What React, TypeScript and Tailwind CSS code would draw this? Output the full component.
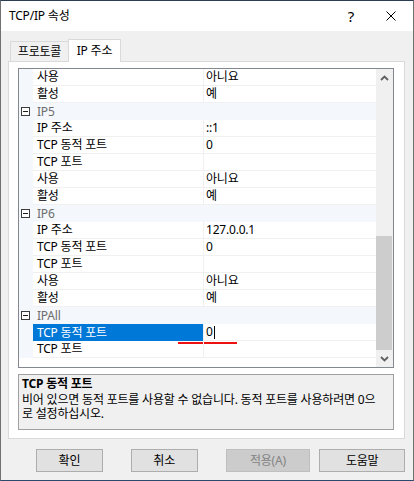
import React from "react";

type Row =
  | { type: "cat"; label: string }
  | { type: "prop"; name: string; value: string; selected?: boolean };

const rows: Row[] = [
  { type: "prop", name: "사용", value: "아니요" },
  { type: "prop", name: "활성", value: "예" },
  { type: "cat", label: "IP5" },
  { type: "prop", name: "IP 주소", value: "::1" },
  { type: "prop", name: "TCP 동적 포트", value: "0" },
  { type: "prop", name: "TCP 포트", value: "" },
  { type: "prop", name: "사용", value: "아니요" },
  { type: "prop", name: "활성", value: "예" },
  { type: "cat", label: "IP6" },
  { type: "prop", name: "IP 주소", value: "127.0.0.1" },
  { type: "prop", name: "TCP 동적 포트", value: "0" },
  { type: "prop", name: "TCP 포트", value: "" },
  { type: "prop", name: "사용", value: "아니요" },
  { type: "prop", name: "활성", value: "예" },
  { type: "cat", label: "IPAll" },
  { type: "prop", name: "TCP 동적 포트", value: "0", selected: true },
  { type: "prop", name: "TCP 포트", value: "" },
];

function GridRow({ row }: { row: Row }) {
  if (row.type === "cat") {
    return (
      <div className="flex h-[17px] bg-[#f4f7fc] items-center">
        <div className="w-[14px] h-full flex items-center pl-[2px]">
          <div className="w-[9px] h-[9px] border border-[#3c3c3c] bg-white flex items-center justify-center">
            <div className="w-[5px] h-px bg-[#1e1e1e]" />
          </div>
        </div>
        <div className="pl-[4px] leading-[17px] text-[#6d6d6d]">{row.label}</div>
      </div>
    );
  }
  return (
    <div className="relative flex h-[17px]">
      <div className="w-[14px] h-full bg-[#f4f7fc]" />
      <div className="flex-1 flex border-b border-[#f0f0f0]">
        <div className="w-[171px] border-r border-[#f0f0f0] flex">
          <div
            className={
              row.selected
                ? "w-[170px] h-[17px] pl-[4px] leading-[17px] bg-[#0078d7] text-white"
                : "w-[170px] pl-[4px] leading-[16px] text-black"
            }
          >
            {row.name}
          </div>
        </div>
        <div className="flex-1 pl-[2px] leading-[16px] text-black flex items-start">
          <span>{row.value}</span>
          {row.selected && <span className="ml-[1px] mt-[2px] w-px h-[13px] bg-black" />}
        </div>
      </div>
      {row.selected && (
        <div className="absolute left-[159px] top-[18px] w-[59px] h-[2px] bg-[#ee1111]" />
      )}
    </div>
  );
}

export default function App() {
  return (
    <div
      className="w-[414px] h-[481px] border border-[#707070] border-t-[#2b3d52] border-b-[#2b4a6e] bg-[#f0f0f0] flex flex-col text-[12px] tracking-[-0.2px] text-black"
      style={{ fontFamily: '"Noto Sans", "Noto Sans CJK KR", sans-serif' }}
    >
      {/* Title bar */}
      <div className="h-[30px] bg-white flex items-center shrink-0">
        <div className="pl-[8px] flex-1 leading-[16px]">TCP/IP 속성</div>
        <div className="text-[15px] leading-[16px] mr-[32px]">?</div>
        <svg width="10" height="10" viewBox="0 0 10 10" className="mr-[17px]">
          <path d="M0.5 0.5 L9.5 9.5 M9.5 0.5 L0.5 9.5" stroke="#000" strokeWidth="1" />
        </svg>
      </div>

      {/* Body */}
      <div className="flex-1 flex flex-col pl-[7px] pr-[8px] pt-[8px]">
        {/* Tabs */}
        <div className="flex items-end h-[22px] pl-[2px] relative z-10">
          <div className="h-[20px] w-[58px] border border-r-0 border-b-0 border-[#d9d9d9] bg-[#f0f0f0] flex items-center justify-center leading-[16px]">
            프로토콜
          </div>
          <div className="h-[23px] w-[53px] border border-b-0 border-[#d9d9d9] bg-white mb-[-1px] flex items-center justify-center leading-[16px] pb-[1px]">
            IP 주소
          </div>
        </div>

        {/* Panel */}
        <div className="h-[378px] border border-[#d9d9d9] bg-white pt-[6px] pl-[9px] pr-[10px] pb-[8px] flex flex-col">
          {/* Property grid */}
          <div className="h-[300px] border border-[#828790] flex bg-white overflow-hidden">
            <div className="flex-1 flex flex-col">
              {rows.map((r, i) => (
                <GridRow key={i} row={r} />
              ))}
            </div>
            <div className="w-[17px] bg-[#f0f0f0] flex flex-col">
              <div className="h-[17px] flex items-center justify-center">
                <svg width="9" height="6" viewBox="0 0 9 6">
                  <path d="M1 5 L4.5 1.5 L8 5" stroke="#606060" strokeWidth="1.8" fill="none" />
                </svg>
              </div>
              <div className="flex-1 flex flex-col justify-end">
                <div className="h-[114px] w-[16px] bg-[#cdcdcd]" />
              </div>
              <div className="h-[17px] flex items-center justify-center">
                <svg width="9" height="6" viewBox="0 0 9 6">
                  <path d="M1 1 L4.5 4.5 L8 1" stroke="#606060" strokeWidth="1.8" fill="none" />
                </svg>
              </div>
            </div>
          </div>

          {/* Description */}
          <div className="mt-[6px] h-[56px] border border-[#a0a0a0] bg-[#f0f0f0] pl-[3px] pt-[1px]">
            <div className="font-bold leading-[16px] h-[16px]">TCP 동적 포트</div>
            <div className="leading-[14px] h-[14px] mt-[1px] whitespace-nowrap">
              비어 있으면 동적 포트를 사용할 수 없습니다. 동적 포트를 사용하려면 0으
            </div>
            <div className="leading-[14px] h-[14px] whitespace-nowrap">로 설정하십시오.</div>
          </div>
        </div>

        {/* Buttons */}
        <div className="flex mt-[10px] h-[23px]">
          <button className="ml-[28px] w-[67px] h-[23px] bg-[#e1e1e1] border border-[#adadad] leading-[16px]">
            확인
          </button>
          <button className="ml-[28px] w-[67px] h-[23px] bg-[#e1e1e1] border border-[#adadad] leading-[16px]">
            취소
          </button>
          <button className="ml-[28px] w-[85px] h-[23px] bg-[#cccccc] border border-[#bfbfbf] text-[#838383] leading-[16px]">
            적용(A)
          </button>
          <button className="ml-[9px] w-[86px] h-[23px] bg-[#e1e1e1] border border-[#adadad] leading-[16px]">
            도움말
          </button>
        </div>
      </div>
    </div>
  );
}
